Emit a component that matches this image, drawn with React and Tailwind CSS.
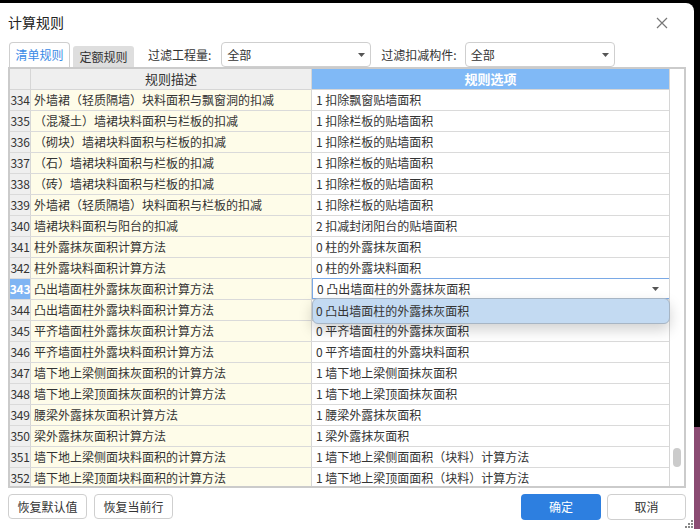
const rows = [
  ["334", "外墙裙（轻质隔墙）块料面积与飘窗洞的扣减", "1 扣除飘窗贴墙面积"],
  ["335", "（混凝土）墙裙块料面积与栏板的扣减", "1 扣除栏板的贴墙面积"],
  ["336", "（砌块）墙裙块料面积与栏板的扣减", "1 扣除栏板的贴墙面积"],
  ["337", "（石）墙裙块料面积与栏板的扣减", "1 扣除栏板的贴墙面积"],
  ["338", "（砖）墙裙块料面积与栏板的扣减", "1 扣除栏板的贴墙面积"],
  ["339", "外墙裙（轻质隔墙）块料面积与栏板的扣减", "1 扣除栏板的贴墙面积"],
  ["340", "墙裙块料面积与阳台的扣减", "2 扣减封闭阳台的贴墙面积"],
  ["341", "柱外露抹灰面积计算方法", "0 柱的外露抹灰面积"],
  ["342", "柱外露块料面积计算方法", "0 柱的外露块料面积"],
  ["343", "凸出墙面柱外露抹灰面积计算方法", "0 凸出墙面柱的外露抹灰面积"],
  ["344", "凸出墙面柱外露块料面积计算方法", "0 凸出墙面柱的外露块料面积"],
  ["345", "平齐墙面柱外露抹灰面积计算方法", "0 平齐墙面柱的外露抹灰面积"],
  ["346", "平齐墙面柱外露块料面积计算方法", "0 平齐墙面柱的外露块料面积"],
  ["347", "墙下地上梁侧面抹灰面积的计算方法", "1 墙下地上梁侧面抹灰面积"],
  ["348", "墙下地上梁顶面抹灰面积的计算方法", "1 墙下地上梁顶面抹灰面积"],
  ["349", "腰梁外露抹灰面积计算方法", "1 腰梁外露抹灰面积"],
  ["350", "梁外露抹灰面积计算方法", "1 梁外露抹灰面积"],
  ["351", "墙下地上梁侧面块料面积的计算方法", "1 墙下地上梁侧面面积（块料）计算方法"],
  ["352", "墙下地上梁顶面块料面积的计算方法", "1 墙下地上梁顶面面积（块料）计算方法"],
]

function Caret() {
  return (
    <svg width="7" height="4" viewBox="0 0 7 4" className="shrink-0">
      <path d="M0 0 L7 0 L3.5 4 Z" fill="#555" />
    </svg>
  )
}

function Select({ label, className }) {
  return (
    <div className={`h-[25px] border border-[#cfcfcf] rounded-[4px] bg-white flex items-center justify-between pl-[5px] pr-[5px] ${className}`}>
      <span>{label}</span>
      <Caret />
    </div>
  )
}

export default function App() {
  return (
    <div
      className="w-[700px] h-[529px] bg-black flex overflow-hidden text-[#333] text-[12px]"
      style={{ fontFamily: '"Noto Sans CJK SC", "Noto Sans", sans-serif' }}
    >
      <div className="mt-[3px] w-[694px] h-[526px] bg-white rounded-tr-[8px] flex flex-col relative">
        {/* title */}
        <div className="h-[39px] flex items-center justify-between pl-[8px] pr-[26px]">
          <span className="text-[14px] text-[#222]">计算规则</span>
          <svg width="12" height="12" viewBox="0 0 12 12">
            <path d="M1 1 L11 11 M11 1 L1 11" stroke="#777" strokeWidth="1.2" />
          </svg>
        </div>

        {/* toolbar */}
        <div className="h-[25px] flex items-end pl-[9px]">
          <div className="h-[25px] w-[61px] border border-b-0 border-[#cfcfcf] rounded-t-[4px] flex items-center justify-center text-[#3a8ae6] bg-white">
            清单规则
          </div>
          <div className="ml-[3px] h-[21px] w-[61px] bg-[#dedede] rounded-t-[3px] flex items-center justify-center">
            定额规则
          </div>
          <span className="ml-[14px] self-center">过滤工程量:</span>
          <Select label="全部" className="ml-[10px] w-[150px] self-center" />
          <span className="ml-[10px] self-center">过滤扣减构件:</span>
          <Select label="全部" className="ml-[8px] w-[150px] self-center" />
        </div>

        {/* table */}
        <div className="ml-[8px] w-[678px] h-[421px] border-2 border-[#cbcbcb] flex relative overflow-hidden">
          <div className="w-[660px] flex flex-col">
            <div className="grid grid-cols-[21px_281px_358px] h-[21px] shrink-0 border-b border-[#d6d6d6]">
              <div className="bg-[#efefef] border-r border-[#d6d6d6]" />
              <div className="bg-[#efefef] border-r border-[#d6d6d6] flex items-center justify-center text-[13px]">
                规则描述
              </div>
              <div className="bg-[#80b9f6] border-r border-[#d6d6d6] flex items-center justify-center text-white text-[13px] font-bold">
                规则选项
              </div>
            </div>
            {rows.map(([n, d, o]) => {
              const sel = n === "343"
              return (
                <div key={n} className="grid grid-cols-[21px_281px_358px] h-[21px] shrink-0 border-b border-[#dadada]">
                  <div
                    className={`border-r border-[#d6d6d6] flex items-center justify-center tracking-[-0.3px] ${
                      sel ? "bg-[#7fb4f3] text-white font-bold" : "bg-[#efefef]"
                    }`}
                  >
                    {n}
                  </div>
                  <div className="bg-[#fefce9] border-r border-[#d6d6d6] flex items-center pl-[3px] whitespace-nowrap overflow-hidden">
                    {d}
                  </div>
                  {sel ? (
                    <div className="border border-[#7aa9e6] bg-white flex items-center justify-between pl-[4px] pr-[10px] -mt-px h-[21px]">
                      <span>{o}</span>
                      <Caret />
                    </div>
                  ) : (
                    <div className="bg-white border-r border-[#d6d6d6] flex items-center pl-[4px] whitespace-nowrap overflow-hidden">
                      {o}
                    </div>
                  )}
                </div>
              )
            })}
          </div>
          <div className="w-[14px] flex flex-col justify-end items-center pb-[19px] border-l border-[#d6d6d6] -ml-px">
            <div className="w-[8px] h-[19px] rounded-full bg-[#cbcbcb]" />
          </div>

          {/* dropdown popup */}
          <div className="absolute left-[302px] top-[229px] w-[358px] h-[26px] rounded-[6px] border border-[#a7b5c4] bg-[#c3daf2] flex items-center pl-[3px] shadow-[0_6px_14px_rgba(0,0,0,0.18)]">
            0 凸出墙面柱的外露抹灰面积
          </div>
        </div>

        {/* buttons */}
        <div className="mt-[6px] flex justify-between pl-[8px] pr-[8px]">
          <div className="flex gap-[7px]">
            <div className="w-[79px] h-[25px] border border-[#cfcfcf] rounded-[4px] flex items-center justify-center">
              恢复默认值
            </div>
            <div className="w-[79px] h-[25px] border border-[#cfcfcf] rounded-[4px] flex items-center justify-center">
              恢复当前行
            </div>
          </div>
          <div className="flex gap-[6px]">
            <div className="w-[80px] h-[26px] bg-[#2d7fe0] rounded-[4px] flex items-center justify-center text-white">
              确定
            </div>
            <div className="w-[79px] h-[26px] border border-[#cfcfcf] rounded-[4px] flex items-center justify-center">
              取消
            </div>
          </div>
        </div>

        {/* resize grip */}
        <svg className="absolute right-0 bottom-0" width="9" height="9" viewBox="0 0 9 9">
          <rect x="6" y="0" width="2" height="2" fill="#888" />
          <rect x="3" y="3" width="2" height="2" fill="#888" />
          <rect x="6" y="3" width="2" height="2" fill="#888" />
          <rect x="0" y="6" width="2" height="2" fill="#888" />
          <rect x="3" y="6" width="2" height="2" fill="#888" />
          <rect x="6" y="6" width="2" height="2" fill="#888" />
        </svg>
      </div>
      <div className="flex-1 flex flex-col">
        <div className="h-[427px] bg-black" />
        <div className="flex-1 bg-[#8b4c73]" />
      </div>
    </div>
  )
}
